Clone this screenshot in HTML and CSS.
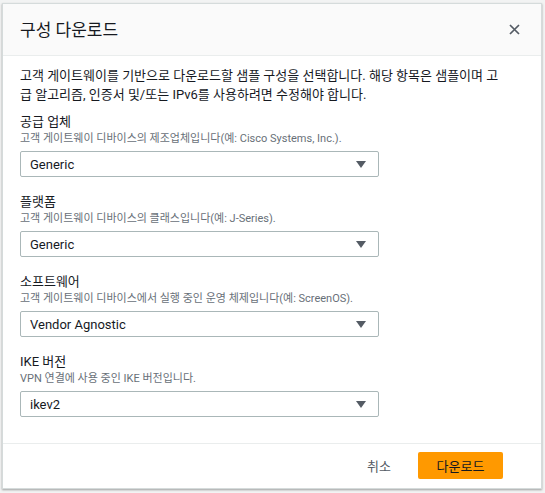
FILE: index.html
```html
<!DOCTYPE html>
<html lang="ko">
<head>
<meta charset="utf-8">
<title>구성 다운로드</title>
<link rel="stylesheet" href="styles.css">
</head>
<body>
<div class="dialog">
  <div class="header">
    <h2 class="title">구성 다운로드</h2>
    <button class="close" aria-label="닫기">
      <svg width="11" height="11" viewBox="0 0 11 11"><path d="M1 1L10 10M10 1L1 10" stroke="#545b64" stroke-width="1.7" fill="none"/></svg>
    </button>
  </div>
  <div class="body">
    <p class="intro">고객 게이트웨이를 기반으로 다운로드할 샘플 구성을 선택합니다. 해당 항목은 샘플이며 고급 알고리즘, 인증서 및/또는 IPv6를 사용하려면 수정해야 합니다.</p>
    <div class="field">
      <div class="label">공급 업체</div>
      <div class="desc">고객 게이트웨이 디바이스의 제조업체입니다(예: Cisco Systems, Inc.).</div>
      <div class="select"><span>Generic</span><span class="caret"></span></div>
    </div>
    <div class="field">
      <div class="label">플랫폼</div>
      <div class="desc">고객 게이트웨이 디바이스의 클래스입니다(예: J-Series).</div>
      <div class="select"><span>Generic</span><span class="caret"></span></div>
    </div>
    <div class="field">
      <div class="label">소프트웨어</div>
      <div class="desc">고객 게이트웨이 디바이스에서 실행 중인 운영 체제입니다(예: ScreenOS).</div>
      <div class="select"><span>Vendor Agnostic</span><span class="caret"></span></div>
    </div>
    <div class="field">
      <div class="label">IKE 버전</div>
      <div class="desc">VPN 연결에 사용 중인 IKE 버전입니다.</div>
      <div class="select"><span>ikev2</span><span class="caret"></span></div>
    </div>
  </div>
  <div class="footer">
    <button class="cancel">취소</button>
    <button class="primary">다운로드</button>
  </div>
</div>
</body>
</html>
```
FILE: styles.css
```css
* { box-sizing: border-box; }
html, body { margin: 0; padding: 0; }
body {
  background: #f2f3f3;
  font-family: Roboto, "Noto Sans CJK KR", sans-serif;
  color: #16191f;
  padding: 3px 3px 4px 2px;
}
.dialog {
  width: 540px;
  height: 486px;
  background: #fff;
  border: 1px solid #d5dbdb;
  box-shadow: 0 1px 2px rgba(0,0,0,0.35);
  display: flex;
  flex-direction: column;
}
.header {
  height: 52px;
  background: #fafafa;
  border-bottom: 1px solid #eaeded;
  display: flex;
  align-items: center;
  justify-content: space-between;
  padding: 0 20px 0 17px;
}
.title {
  margin: 0;
  font-size: 17px;
  font-weight: 400;
  line-height: 22px;
}
.close {
  background: none;
  border: 0;
  padding: 0;
  width: 14px;
  height: 14px;
  display: flex;
  align-items: center;
  justify-content: center;
  margin-right: 0;
}
.body {
  flex: 1;
  padding: 10px 36px 0 17px;
}
.intro {
  margin: 0 0 9px;
  font-size: 13px;
  line-height: 19px;
  word-break: break-all;
}
.field { margin-bottom: 16px; }
.label {
  font-size: 13px;
  line-height: 18px;
}
.desc {
  font-size: 11px;
  line-height: 16px;
  color: #687078;
  margin-bottom: 4px;
}
.select {
  width: 359px;
  height: 26px;
  border: 1px solid #aab7b8;
  border-radius: 2px;
  display: flex;
  align-items: center;
  justify-content: space-between;
  padding: 0 12px 0 9px;
  font-size: 13px;
}
.caret {
  width: 0;
  height: 0;
  border-left: 5px solid transparent;
  border-right: 5px solid transparent;
  border-top: 7px solid #545b64;
}
.footer {
  height: 45px;
  border-top: 1px solid #eaeded;
  display: flex;
  align-items: center;
  justify-content: flex-end;
  gap: 27px;
  padding: 0 38px 1px 0;
}
.cancel {
  background: none;
  border: 0;
  padding: 0;
  font: inherit;
  font-size: 13px;
  color: #545b64;
}
.primary {
  width: 85px;
  height: 27px;
  background: #ff9900;
  border: 0;
  border-radius: 2px;
  font: inherit;
  font-size: 13px;
  color: #16191f;
}
```
